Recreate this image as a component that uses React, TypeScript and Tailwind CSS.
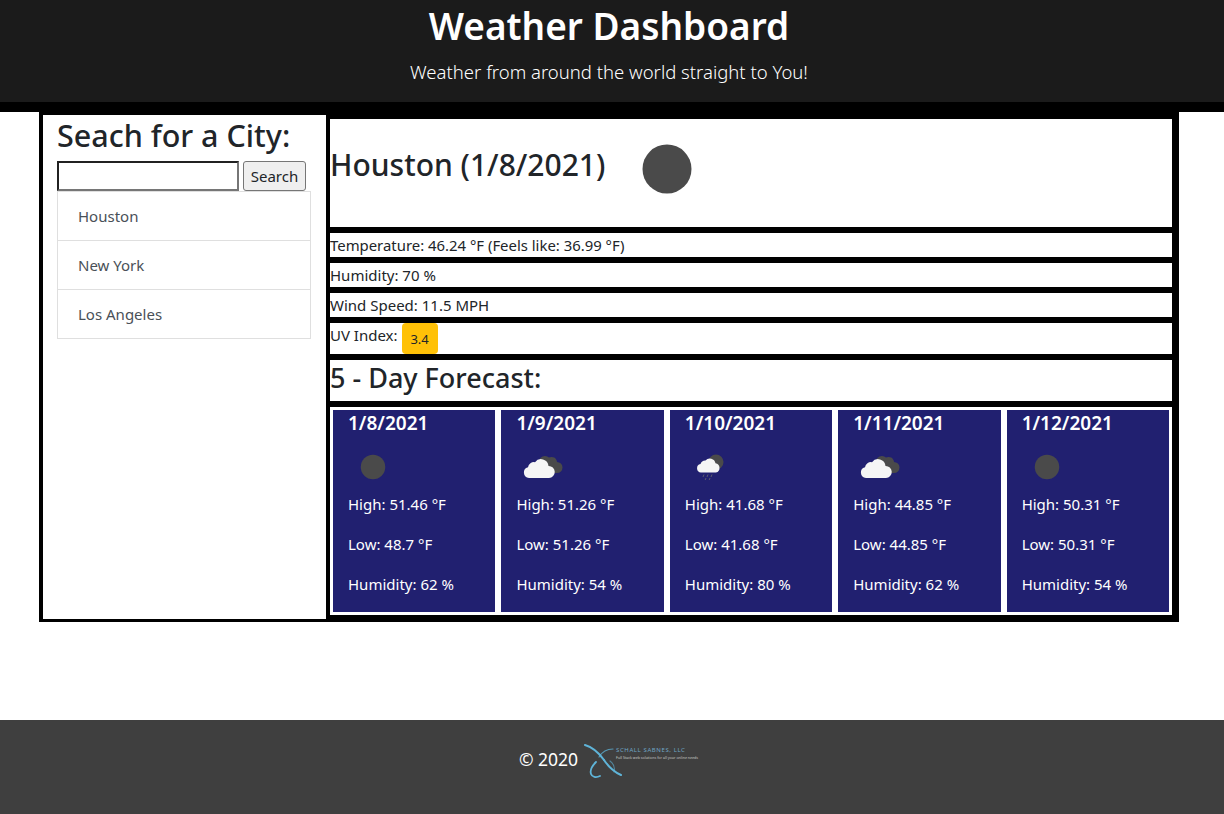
const font = { fontFamily: '"Noto Sans", sans-serif' };

function Moon({ size }: { size: number }) {
  return (
    <svg width={size} height={size} viewBox="0 0 100 100" className="shrink-0">
      <circle cx="50" cy="50" r="24.5" fill="#4a4a4a" />
    </svg>
  );
}

function Clouds() {
  return (
    <svg width="50" height="50" viewBox="0 0 50 50" className="shrink-0">
      <path d="M23 20a6 6 0 0 1 10-4.500 5.500 5.500 0 0 1 8 4.500 5.500 5.500 0 0 1 0 11H26z" fill="#4a4a4a" />
      <path d="M13 36a5.500 5.500 0 0 1-1-10.800 6 6 0 0 1 7-5 7.500 7.500 0 0 1 13.500 3.800 6 6 0 0 1 .5 12z" fill="#f5f5f5" />
    </svg>
  );
}

function Rain() {
  return (
    <svg width="50" height="50" viewBox="0 0 50 50" className="shrink-0">
      <circle cx="31" cy="20" r="7.500" fill="#4a4a4a" />
      <path d="M16 30.500a4.300 4.300 0 0 1-.5-8.500 5 5 0 0 1 5-3.500 5.800 5.800 0 0 1 10 2.800 4.700 4.700 0 0 1 .5 9.200z" fill="#f5f5f5" />
      <path d="M19 32.500l-1 2.500M23 32.500l-1 2.500M27 32.500l-1 2.500M21 36l-.8 2M25 36l-.8 2" stroke="#5b5b6e" strokeWidth="1" fill="none" />
    </svg>
  );
}

const forecast = [
  { date: '1/8/2021', high: '51.46', low: '48.7', humidity: 62, icon: <Moon size={50} /> },
  { date: '1/9/2021', high: '51.26', low: '51.26', humidity: 54, icon: <Clouds /> },
  { date: '1/10/2021', high: '41.68', low: '41.68', humidity: 80, icon: <Rain /> },
  { date: '1/11/2021', high: '44.85', low: '44.85', humidity: 62, icon: <Clouds /> },
  { date: '1/12/2021', high: '50.31', low: '50.31', humidity: 54, icon: <Moon size={50} /> },
];

const cities = ['Houston', 'New York', 'Los Angeles'];

export default function App() {
  return (
    <div style={font} className="min-h-[814px] bg-white text-[15px] text-[#212529]">
      {/* Header */}
      <header className="h-[112px] border-b-[10px] border-black bg-[#1b1b1b] pr-[6px] text-center text-white">
        <h1 className="pt-[2px] text-[37px] leading-[48px] font-semibold">Weather Dashboard</h1>
        <p className="mt-[7px] text-[18.5px] leading-[30px] font-light">Weather from around the world straight to You!</p>
      </header>

      <main className="mr-[45px] ml-[39px] flex h-[510px]">
        {/* Sidebar */}
        <aside className="w-[287px] shrink-0 border-y-[3px] border-l-4 border-black pl-[14px]">
          <h2 className="pt-[1px] text-[30.5px] leading-[38px] font-medium">Seach for a City:</h2>
          <div className="mt-[7px] flex gap-[4px]">
            <input className="h-[30px] w-[182px] border-2 border-t-[#212121] border-r-[#767676] border-b-[#767676] border-l-[#212121] bg-white" />
            <button className="h-[30px] w-[63px] rounded-[3px] border border-[#767676] bg-[#efefef] text-[15px] text-[#212529]">Search</button>
          </div>
          <ul className="w-[254px] border border-b-0 border-[#dfdfdf]">
            {cities.map((city) => (
              <li key={city} className="h-[49px] border-b border-[#dfdfdf] px-[20px] py-[12px] leading-[24px] text-[#495057]">{city}</li>
            ))}
          </ul>
        </aside>

        {/* Current weather */}
        <section className="flex flex-1 flex-col gap-[6px] bg-black pt-[7px] pr-[7px] pb-[7px] pl-[4px]">
          <div className="flex h-[108px] items-start bg-white">
            <h2 className="mt-[27px] w-[287px] text-[30px] leading-[38px] font-medium">Houston (1/8/2021)</h2>
            <Moon size={100} />
          </div>
          <div className="h-[24px] bg-white text-[14.9px] leading-[24px]">Temperature: 46.24 °F (Feels like: 36.99 °F)</div>
          <div className="h-[24px] bg-white leading-[24px]">Humidity: 70 %</div>
          <div className="h-[24px] bg-white leading-[24px]">Wind Speed: 11.5 MPH</div>
          <div className="flex h-[31px] items-start bg-white leading-[24px]">
            UV Index:
            <span className="ml-[4px] flex h-[31px] w-[36px] items-center justify-center rounded-[4px] bg-[#ffc107] pt-[1px] text-[13px]">3.4</span>
          </div>
          <h3 className="h-[41px] bg-white text-[27px] leading-[36px] font-medium">5 - Day Forecast:</h3>
          <div className="flex flex-1 gap-[6px] bg-white p-[3px]">
            {forecast.map((day) => (
              <div key={day.date} className="flex-1 bg-[#212070] px-[15px] text-white">
                <h4 className="text-[19px] leading-[26px] font-semibold">{day.date}</h4>
                <div className="mt-[6px] h-[50px]">{day.icon}</div>
                <p className="leading-[24px]">High: {day.high} °F</p>
                <p className="mt-[16px] leading-[24px]">Low: {day.low} °F</p>
                <p className="mt-[16px] leading-[24px]">Humidity: {day.humidity} %</p>
              </div>
            ))}
          </div>
        </section>
      </main>

      {/* Footer */}
      <footer className="mt-[98px] flex h-[94px] items-start justify-center bg-[#3f3f3f] pt-[24px] pr-[6px] text-white">
        <span className="mt-[3px] text-[17.5px] leading-[24px]">© 2020</span>
        <div className="ml-[6px] flex w-[115px]">
          <svg width="38" height="36" viewBox="0 0 38 36" className="shrink-0">
            <g fill="none" stroke="#5fb4d8" strokeLinecap="round">
              <path d="M1 1c7 2 14 8 19 15" strokeWidth="2" />
              <path d="M37 31c-7-3-13-9-17-15" strokeWidth="2" />
              <path d="M15 13c3-5 8-8 14-8" strokeWidth="1.200" opacity="0.75" />
              <path d="M26 17c4 3 5 7 4 11" strokeWidth="1.200" opacity="0.6" />
              <path d="M12 18c-4 4-6 9-5 12 1 3 5 4 9 2" strokeWidth="1.800" />
            </g>
          </svg>
          <div className="-ml-[7px] pt-[2px] pl-[1px]">
            <div className="text-[6px] leading-[8px] tracking-[0.6px] whitespace-nowrap text-[#6fa5c4]">SCHALL SABNES, LLC</div>
            <div className="mt-[1px] text-[3.6px] leading-[6px] whitespace-nowrap text-[#c8c8c8]">Full Stack web solutions for all your online needs</div>
          </div>
        </div>
      </footer>
    </div>
  );
}
